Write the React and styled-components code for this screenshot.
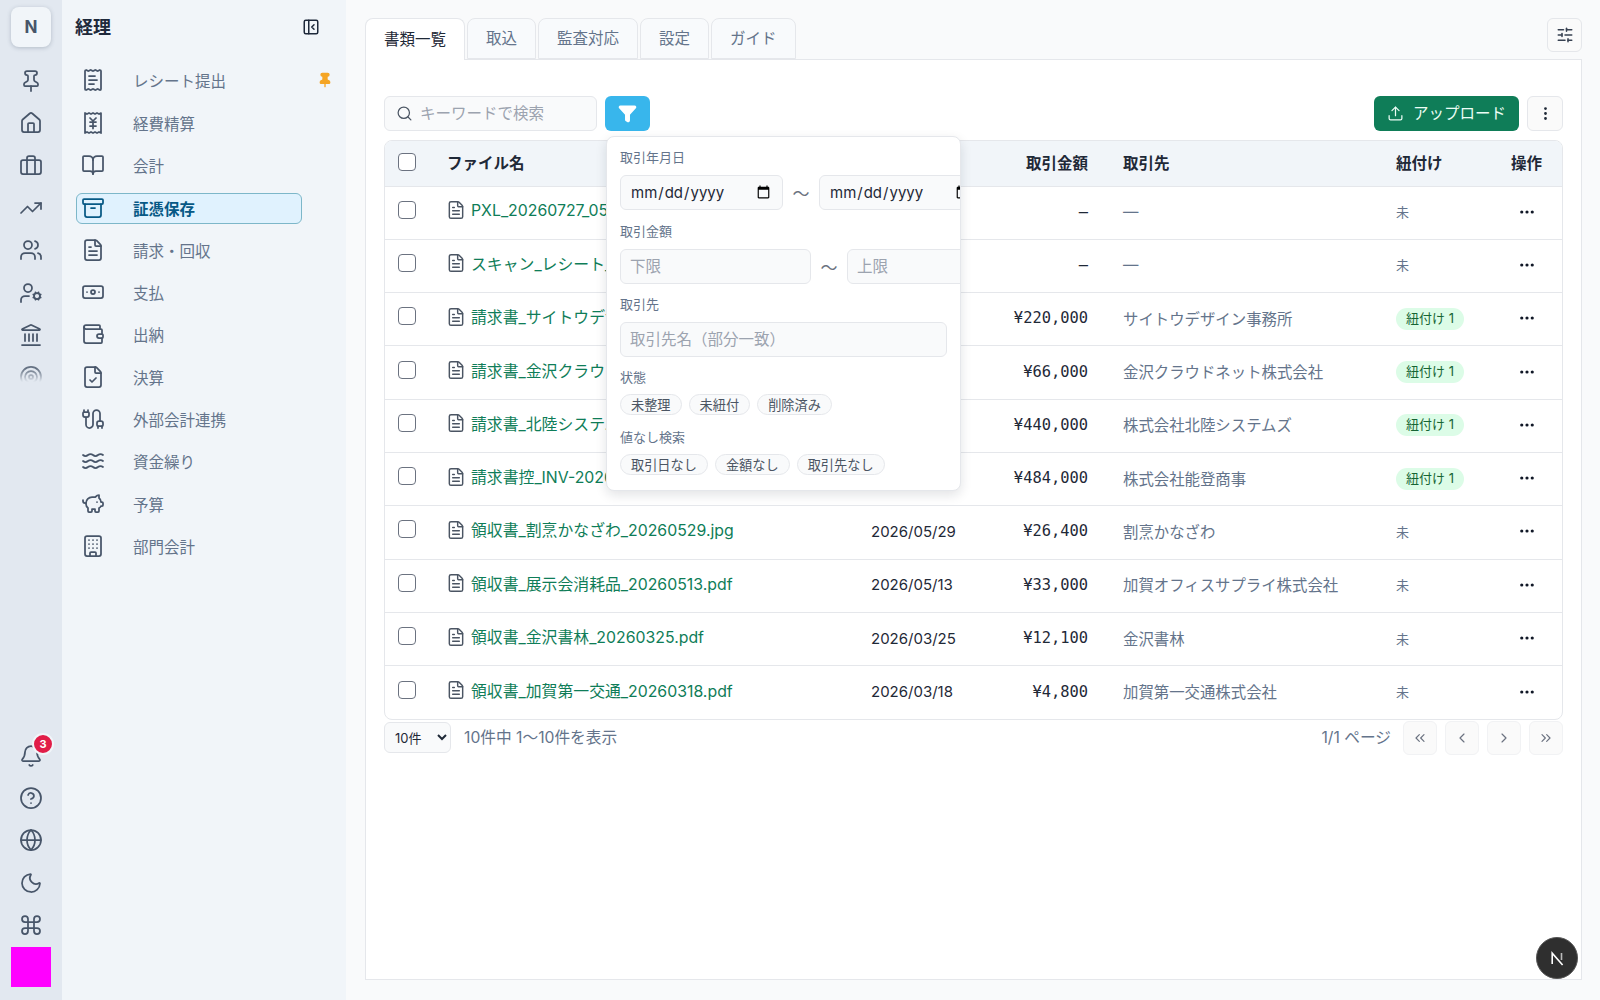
import React from "react";
import styled, { createGlobalStyle } from "styled-components";
import {
  Pin, House, Briefcase, TrendingUp, Users, UserCog, Landmark, Target, Bell, CircleHelp, Globe, Moon, Command,
  ReceiptText, ReceiptJapaneseYen, BookOpen, Archive, FileText, Banknote, Wallet, FileCheck, Cable, Waves, PiggyBank,
  Building, PanelLeftClose, SlidersHorizontal, Search, Filter, Upload, EllipsisVertical, Ellipsis,
  ChevronsLeft, ChevronLeft, ChevronRight, ChevronsRight,
} from "lucide-react";

const GlobalStyle = createGlobalStyle`
  html, body { margin: 0; padding: 0; height: 100%; }
  body {
    font-family: Inter, "Noto Sans CJK JP", sans-serif;
    background: #f9fafb;
    color: #1f2937;
    overflow: hidden;
  }
  * { box-sizing: border-box; }
`;

const railTop = [Pin, House, Briefcase, TrendingUp, Users, UserCog, Landmark];
const railBottom = [CircleHelp, Globe, Moon, Command];

const navItems = [
  { icon: ReceiptText, label: "レシート提出", pinned: true },
  { icon: ReceiptJapaneseYen, label: "経費精算" },
  { icon: BookOpen, label: "会計" },
  { icon: Archive, label: "証憑保存", active: true },
  { icon: FileText, label: "請求・回収" },
  { icon: Banknote, label: "支払" },
  { icon: Wallet, label: "出納" },
  { icon: FileCheck, label: "決算" },
  { icon: Cable, label: "外部会計連携" },
  { icon: Waves, label: "資金繰り" },
  { icon: PiggyBank, label: "予算" },
  { icon: Building, label: "部門会計" },
];

const tabs = ["書類一覧", "取込", "監査対応", "設定", "ガイド"];

const columns = [51, 424, 130, 122, 273, 115, 64];

const rows = [
  { name: "PXL_20260727_053012.jpg", date: "", amount: "—", partner: "—" },
  { name: "スキャン_レシート_20260727.pdf", date: "", amount: "—", partner: "—" },
  { name: "請求書_サイトウデザイン事務所.pdf", date: "2026/06/30", amount: "¥220,000", partner: "サイトウデザイン事務所", linked: true },
  { name: "請求書_金沢クラウドネット.pdf", date: "2026/06/30", amount: "¥66,000", partner: "金沢クラウドネット株式会社", linked: true },
  { name: "請求書_北陸システムズ.pdf", date: "2026/06/15", amount: "¥440,000", partner: "株式会社北陸システムズ", linked: true },
  { name: "請求書控_INV-2026-0412.pdf", date: "2026/06/01", amount: "¥484,000", partner: "株式会社能登商事", linked: true },
  { name: "領収書_割烹かなざわ_20260529.jpg", date: "2026/05/29", amount: "¥26,400", partner: "割烹かなざわ" },
  { name: "領収書_展示会消耗品_20260513.pdf", date: "2026/05/13", amount: "¥33,000", partner: "加賀オフィスサプライ株式会社" },
  { name: "領収書_金沢書林_20260325.pdf", date: "2026/03/25", amount: "¥12,100", partner: "金沢書林" },
  { name: "領収書_加賀第一交通_20260318.pdf", date: "2026/03/18", amount: "¥4,800", partner: "加賀第一交通株式会社" },
];

export default function App() {
  return (
    <Page>
      <GlobalStyle />
      <Rail>
        <Logo>N</Logo>
        <RailGroup>
          {railTop.map((Icon, i) => (
            <RailButton key={i}><Icon size={24} strokeWidth={1.75} /></RailButton>
          ))}
          <RailButton $faded><Target size={24} strokeWidth={1.75} /></RailButton>
        </RailGroup>
        <RailSpacer />
        <RailGroup>
          <RailButton>
            <Bell size={24} strokeWidth={1.75} />
            <BellBadge>3</BellBadge>
          </RailButton>
          {railBottom.map((Icon, i) => (
            <RailButton key={i}><Icon size={24} strokeWidth={1.75} /></RailButton>
          ))}
        </RailGroup>
        <Avatar />
      </Rail>

      <Sidebar>
        <SidebarHead>
          <SidebarTitle>経理</SidebarTitle>
          <Collapse><PanelLeftClose size={18} strokeWidth={2} /></Collapse>
        </SidebarHead>
        <NavList>
          {navItems.map(({ icon: Icon, label, pinned, active }) => (
            <NavRow key={label}>
              <NavItem $active={active}>
                <Icon size={24} strokeWidth={1.75} />
                <span>{label}</span>
              </NavItem>
              {pinned && <PinMark><Pin size={16} strokeWidth={2} fill="#f5a524" /></PinMark>}
            </NavRow>
          ))}
        </NavList>
      </Sidebar>

      <Main>
        <TabBar>
          {tabs.map((t, i) => <Tab key={t} $active={i === 0}>{t}</Tab>)}
          <TabSpacer />
          <SettingsButton><SlidersHorizontal size={18} strokeWidth={2} /></SettingsButton>
        </TabBar>
        <Panel>
          <Toolbar>
            <SearchBox>
              <Search size={17} strokeWidth={1.75} color="#4b5563" />
              <SearchInput placeholder="キーワードで検索" />
            </SearchBox>
            <FilterWrap>
              <FilterButton><Filter size={19} fill="#fff" color="#fff" strokeWidth={2.25} /></FilterButton>
              <Popover>
                <FieldLabel>取引年月日</FieldLabel>
                <RangeRow>
                  <DateInput type="date" />
                  <Tilde>〜</Tilde>
                  <DateInput type="date" />
                </RangeRow>
                <FieldLabel>取引金額</FieldLabel>
                <RangeRow>
                  <TextInput $w={191} placeholder="下限" />
                  <Tilde>〜</Tilde>
                  <TextInput $w={191} placeholder="上限" />
                </RangeRow>
                <FieldLabel>取引先</FieldLabel>
                <RangeRow $last>
                  <TextInput $w={327} placeholder="取引先名（部分一致）" />
                </RangeRow>
                <FieldLabel $tight>状態</FieldLabel>
                <ChipRow>
                  <Chip>未整理</Chip><Chip>未紐付</Chip><Chip>削除済み</Chip>
                </ChipRow>
                <FieldLabel $tight>値なし検索</FieldLabel>
                <ChipRow>
                  <Chip>取引日なし</Chip><Chip>金額なし</Chip><Chip>取引先なし</Chip>
                </ChipRow>
              </Popover>
            </FilterWrap>
            <ToolbarSpacer />
            <UploadButton><Upload size={17} strokeWidth={1.75} /><span>アップロード</span></UploadButton>
            <KebabButton><EllipsisVertical size={17} strokeWidth={2} /></KebabButton>
          </Toolbar>

          <TableCard>
            <Table>
              <colgroup>
                {columns.map((w, i) => <Col key={i} $w={w} />)}
              </colgroup>
              <thead>
                <tr>
                  <Th><Check $header /></Th>
                  <Th>ファイル名</Th>
                  <Th>取引年月日</Th>
                  <Th $right>取引金額</Th>
                  <Th>取引先</Th>
                  <Th>紐付け</Th>
                  <Th>操作</Th>
                </tr>
              </thead>
              <tbody>
                {rows.map((r) => (
                  <tr key={r.name}>
                    <Td><Check /></Td>
                    <Td>
                      <FileCell>
                        <FileText size={20} strokeWidth={1.75} color="#4b5563" />
                        <FileLink>{r.name}</FileLink>
                      </FileCell>
                    </Td>
                    <Td>{r.date}</Td>
                    <Amount>{r.amount}</Amount>
                    <Partner>{r.partner}</Partner>
                    <Td>{r.linked ? <LinkBadge>紐付け 1</LinkBadge> : <Unlinked>未</Unlinked>}</Td>
                    <Td><RowMenu><Ellipsis size={18} strokeWidth={2.25} /></RowMenu></Td>
                  </tr>
                ))}
              </tbody>
            </Table>
          </TableCard>

          <Pager>
            <PageSize defaultValue="10">
              <option value="10">10件</option>
            </PageSize>
            <PagerText>10件中 1〜10件を表示</PagerText>
            <ToolbarSpacer />
            <PagerText>1/1 ページ</PagerText>
            <PagerButtons>
              <PageButton><ChevronsLeft size={16} strokeWidth={1.75} /></PageButton>
              <PageButton><ChevronLeft size={16} strokeWidth={1.75} /></PageButton>
              <PageButton><ChevronRight size={16} strokeWidth={1.75} /></PageButton>
              <PageButton><ChevronsRight size={16} strokeWidth={1.75} /></PageButton>
            </PagerButtons>
          </Pager>
        </Panel>
      </Main>

      <DevBadge>
        <svg width="15" height="15" viewBox="0 0 15 15" fill="none" strokeWidth="1.6">
          <path d="M2.2 13V2.2L12.6 14" stroke="#fff" />
          <path d="M11.5 2v7" stroke="#bbb" />
        </svg>
      </DevBadge>
    </Page>
  );
}

const Page = styled.div`
  display: flex;
  height: 1000px;
  width: 1600px;
  overflow: hidden;
`;

const Rail = styled.aside`
  width: 62px;
  flex: none;
  background: #e2e8f0;
  display: flex;
  flex-direction: column;
  align-items: center;
  padding: 7px 0 13px;
`;

const Logo = styled.div`
  width: 40px;
  height: 40px;
  border-radius: 8px;
  background: #f1f5f9;
  box-shadow: 0 1px 4px rgba(71, 85, 105, 0.3);
  color: #475569;
  font-weight: 700;
  font-size: 17px;
  display: flex;
  align-items: center;
  justify-content: center;
  margin-bottom: 13px;
`;

const RailGroup = styled.div`
  display: flex;
  flex-direction: column;
  gap: 0;
`;

const RailButton = styled.div`
  position: relative;
  width: 40px;
  height: 42.3px;
  display: flex;
  align-items: center;
  justify-content: center;
  color: #475569;
  ${(p) => p.$faded && `
    opacity: .8;
    -webkit-mask-image: linear-gradient(#000 30%, transparent 62%);
    mask-image: linear-gradient(#000 30%, transparent 62%);
  `}
`;

const RailSpacer = styled.div`
  flex: 1;
`;

const BellBadge = styled.span`
  position: absolute;
  top: -2px;
  right: -3px;
  width: 22px;
  height: 22px;
  border-radius: 50%;
  background: #e11d48;
  border: 2px solid #f1f5f9;
  color: #fff;
  font-size: 11px;
  font-weight: 700;
  display: flex;
  align-items: center;
  justify-content: center;
`;

const Avatar = styled.div`
  width: 40px;
  height: 40px;
  background: #ff00ff;
  margin-top: 1px;
`;

const Sidebar = styled.aside`
  width: 284px;
  flex: none;
  background: #f1f5f9;
  padding: 0 14px;
`;

const SidebarHead = styled.div`
  height: 53px;
  display: flex;
  align-items: center;
  justify-content: space-between;
  width: 244px;
`;

const SidebarTitle = styled.h1`
  margin: 0 0 0 -1px;
  padding-bottom: 2px;
  font-size: 18px;
  font-weight: 700;
  color: #1e293b;
`;

const Collapse = styled.div`
  display: flex;
  color: #1e293b;
`;

const NavList = styled.nav`
  display: flex;
  flex-direction: column;
  margin-top: 6px;
`;

const NavRow = styled.div`
  height: 42.35px;
  display: flex;
  align-items: center;
  position: relative;
`;

const NavItem = styled.div`
  width: 226px;
  height: 31px;
  margin-top: ${(p) => (p.$active ? "2px" : "0")};
  display: flex;
  align-items: center;
  gap: 28px;
  padding-left: 4px;
  border-radius: 6px;
  font-size: 15.5px;
  color: ${(p) => (p.$active ? "#075985" : "#64748b")};
  font-weight: ${(p) => (p.$active ? 700 : 400)};
  border: 1px solid ${(p) => (p.$active ? "#7db7c9" : "transparent")};
  background: ${(p) => (p.$active ? "#e0f2fe" : "transparent")};
  svg {
    color: ${(p) => (p.$active ? "#075985" : "#475569")};
    flex: none;
  }
`;

const PinMark = styled.span`
  position: absolute;
  left: 241px;
  top: 13px;
  display: flex;
  color: #f5a524;
`;

const Main = styled.main`
  flex: 1;
  min-width: 0;
  padding: 18px 18px 20px 19px;
  display: flex;
  flex-direction: column;
`;

const TabBar = styled.div`
  display: flex;
  align-items: flex-start;
  height: 41px;
  gap: 2px;
  position: relative;
  z-index: 1;
`;

const Tab = styled.div`
  height: ${(p) => (p.$active ? "42px" : "41px")};
  padding: 0 18px ${(p) => (p.$active ? "4px" : "3px")};
  display: flex;
  align-items: center;
  font-size: 15.5px;
  color: ${(p) => (p.$active ? "#1f2937" : "#64748b")};
  background: ${(p) => (p.$active ? "#fff" : "#f8fafc")};
  border: 1px solid #e5e7eb;
  border-bottom: ${(p) => (p.$active ? "none" : "1px solid #e5e7eb")};
  border-radius: 8px 8px 0 0;
`;

const TabSpacer = styled.div`
  flex: 1;
`;

const SettingsButton = styled.div`
  width: 35px;
  height: 34px;
  border: 1px solid #e5e7eb;
  border-radius: 6px;
  background: #fafafa;
  display: flex;
  align-items: center;
  justify-content: center;
  color: #374151;
`;

const Panel = styled.section`
  flex: 1;
  background: #fff;
  border: 1px solid #e5e7eb;
  padding: 36px 18px 0;
  display: flex;
  flex-direction: column;
`;

const Toolbar = styled.div`
  display: flex;
  align-items: center;
  height: 35px;
  margin-bottom: 9px;
`;

const SearchBox = styled.div`
  width: 213px;
  height: 35px;
  display: flex;
  align-items: center;
  gap: 5px;
  padding: 0 11px;
  background: #f9fafb;
  border: 1px solid #e5e7eb;
  border-radius: 6px;
`;

const SearchInput = styled.input`
  flex: 1;
  min-width: 0;
  border: 0;
  outline: 0;
  background: transparent;
  font: 15.5px Inter, "Noto Sans CJK JP", sans-serif;
  &::placeholder { color: #9ca3af; }
`;

const FilterWrap = styled.div`
  position: relative;
  margin-left: 8px;
`;

const FilterButton = styled.div`
  width: 45px;
  height: 35px;
  border-radius: 6px;
  background: #38b6ec;
  display: flex;
  align-items: center;
  justify-content: center;
`;

const Popover = styled.div`
  position: absolute;
  top: 40px;
  left: 1px;
  width: 355px;
  height: 355px;
  background: #fff;
  border: 1px solid #e5e7eb;
  border-radius: 8px;
  box-shadow: 0 4px 12px rgba(15, 23, 42, 0.12);
  padding: 11px 13px;
  overflow: hidden;
  z-index: 5;
`;

const FieldLabel = styled.div`
  font-size: 13px;
  line-height: 18px;
  color: #64748b;
  margin-bottom: ${(p) => (p.$tight ? "8px" : "9px")};
`;

const RangeRow = styled.div`
  display: flex;
  align-items: center;
  gap: 8px;
  margin-bottom: ${(p) => (p.$last ? "10.5px" : "11.5px")};
`;

const Tilde = styled.span`
  flex: none;
  width: 20px;
  text-align: center;
  font-size: 17px;
  color: #6b7280;
`;

const DateInput = styled.input`
  flex: none;
  width: 163px;
  height: 35px;
  border: 1px solid #e5e7eb;
  border-radius: 6px;
  background: #f9fafb;
  padding: 0 9px;
  font: 15px Inter, sans-serif;
  color: #1f2937;
`;

const TextInput = styled.input`
  flex: none;
  width: ${(p) => p.$w}px;
  height: 35px;
  border: 1px solid #e5e7eb;
  border-radius: 6px;
  background: #f9fafb;
  padding: 0 9px;
  font: 15.5px Inter, "Noto Sans CJK JP", sans-serif;
  &::placeholder { color: #9ca3af; }
`;

const ChipRow = styled.div`
  display: flex;
  gap: 7px;
  margin-bottom: 13px;
`;

const Chip = styled.span`
  height: 21px;
  display: inline-flex;
  align-items: center;
  padding: 0 10px;
  border: 1px solid #e5e7eb;
  border-radius: 11px;
  background: #f9fafb;
  font-size: 13.2px;
  color: #4b5563;
`;

const ToolbarSpacer = styled.div`
  flex: 1;
`;

const UploadButton = styled.div`
  width: 145px;
  height: 35px;
  border-radius: 6px;
  background: #0f7d58;
  color: #ecfdf5;
  display: flex;
  align-items: center;
  justify-content: center;
  gap: 9px;
  font-size: 15.5px;
  span { padding-bottom: 3px; }
`;

const KebabButton = styled.div`
  width: 36px;
  height: 35px;
  margin-left: 8px;
  border: 1px solid #e5e7eb;
  border-radius: 6px;
  background: #fafafa;
  display: flex;
  align-items: center;
  justify-content: center;
  color: #1f2937;
`;

const TableCard = styled.div`
  border: 1px solid #e5e7eb;
  border-radius: 8px;
  overflow: hidden;
`;

const Table = styled.table`
  width: 100%;
  border-collapse: collapse;
  table-layout: fixed;
  font-size: 15px;
`;

const Col = styled.col`
  width: ${(p) => p.$w}px;
`;

const Th = styled.th`
  height: 45px;
  background: #f1f5f9;
  padding: 0 12px 3px 11px;
  text-align: ${(p) => (p.$right ? "right" : "left")};
  font-weight: 700;
  font-size: 15.5px;
  color: #1f2937;
  white-space: nowrap;
  &:nth-child(4) { padding-right: 24px; }
  &:first-child { padding: 0 0 0 13px; }
`;

const Td = styled.td`
  height: 53.3px;
  padding: 0 12px 2px 11px;
  border-top: 1px solid #e5e7eb;
  color: #1f2937;
  white-space: nowrap;
  &:first-child { padding: 0 0 0 13px; }
`;

const Amount = styled(Td)`
  text-align: right;
  padding-right: 24px;
  font-family: "DejaVu Sans Mono", monospace;
  font-size: 15.4px;
`;

const Partner = styled(Td)`
  color: #64748b;
  font-size: 15.4px;
  padding-bottom: 3px;
`;

const Check = styled.span`
  display: block;
  width: 18px;
  height: 18px;
  margin-bottom: ${(p) => (p.$header ? "3px" : "6px")};
  border: 1.5px solid #6b7280;
  border-radius: 4px;
  background: #fff;
`;

const FileCell = styled.div`
  display: flex;
  align-items: center;
  gap: 5px;
  margin: 0 0 3px -1px;
`;

const FileLink = styled.span`
  color: #0f7d58;
  font-size: 15.85px;
  white-space: nowrap;
`;

const LinkBadge = styled.span`
  display: inline-block;
  height: 22px;
  line-height: 21px;
  margin-top: 1px;
  padding: 0 10px;
  border-radius: 11px;
  background: #dcfce7;
  color: #166534;
  font-size: 13px;
  font-weight: 400;
  white-space: nowrap;
`;

const Unlinked = styled.span`
  font-size: 13px;
  color: #64748b;
`;

const RowMenu = styled.div`
  width: 30px;
  margin-left: 1px;
  display: flex;
  justify-content: center;
  color: #111827;
`;

const Pager = styled.div`
  display: flex;
  align-items: center;
  height: 34px;
  margin-top: 1px;
`;

const PageSize = styled.select`
  width: 67px;
  height: 31px;
  border: 1px solid #e5e7eb;
  border-radius: 6px;
  background: #f9fafb;
  font: 13px Inter, "Noto Sans CJK JP", sans-serif;
  color: #1f2937;
  padding: 0 6px;
  margin-right: 13px;
`;

const PagerText = styled.span`
  font-size: 15.7px;
  padding-bottom: 2px;
  color: #64748b;
`;

const PagerButtons = styled.div`
  display: flex;
  gap: 8px;
  margin-left: 12px;
`;

const PageButton = styled.div`
  width: 34px;
  height: 34px;
  border: 1px solid #f1f2f4;
  border-radius: 6px;
  background: #fafafa;
  display: flex;
  align-items: center;
  justify-content: center;
  color: #6b7280;
`;

const DevBadge = styled.div`
  position: fixed;
  left: 1536px;
  top: 937px;
  width: 42px;
  height: 42px;
  border-radius: 50%;
  background: #2f2f2f;
  border: 1px solid #555;
  display: flex;
  align-items: center;
  justify-content: center;
`;
